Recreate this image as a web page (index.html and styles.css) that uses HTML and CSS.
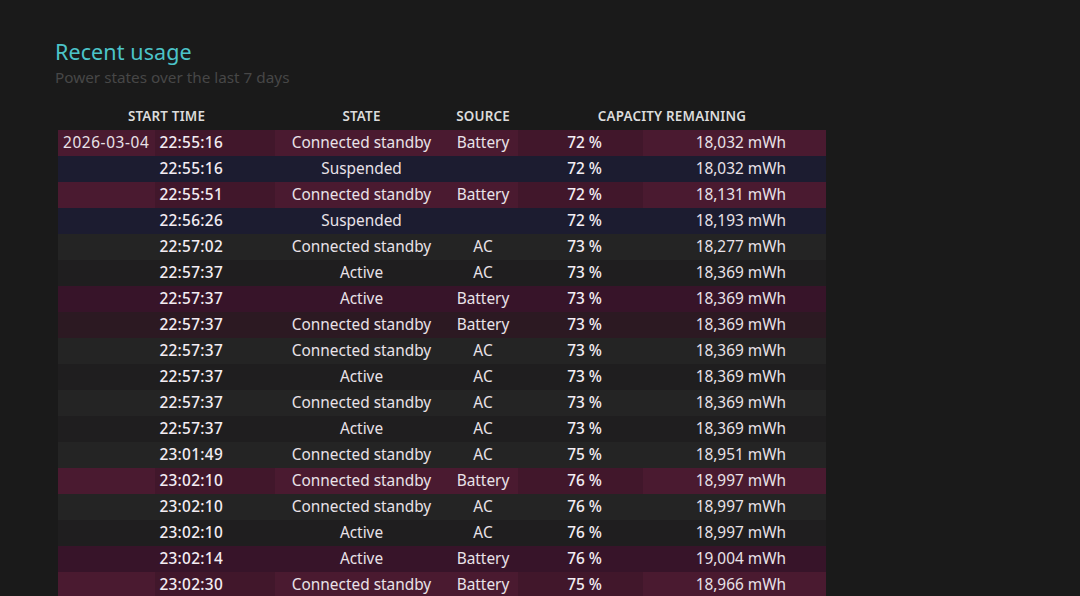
FILE: index.html
```html
<!DOCTYPE html>
<html>
<head>
<meta charset="utf-8">
<link rel="stylesheet" href="styles.css">
</head>
<body>
<section class="report">
  <h1 class="title">Recent usage</h1>
  <p class="subtitle">Power states over the last 7 days</p>
  <div class="table">
    <div class="row head">
      <div class="c-start">START TIME</div>
      <div class="c-state">STATE</div>
      <div class="c-source">SOURCE</div>
      <div class="c-cap">CAPACITY REMAINING</div>
    </div>
    <div class="row dc"><div class="c-date">2026-03-04</div><div class="c-time">22:55:16</div><div class="c-state">Connected standby</div><div class="c-source">Battery</div><div class="c-pct">72 %</div><div class="c-mwh">18,032 mWh</div></div>
    <div class="row susp"><div class="c-date"></div><div class="c-time">22:55:16</div><div class="c-state">Suspended</div><div class="c-source"></div><div class="c-pct">72 %</div><div class="c-mwh">18,032 mWh</div></div>
    <div class="row dc"><div class="c-date"></div><div class="c-time">22:55:51</div><div class="c-state">Connected standby</div><div class="c-source">Battery</div><div class="c-pct">72 %</div><div class="c-mwh">18,131 mWh</div></div>
    <div class="row susp"><div class="c-date"></div><div class="c-time">22:56:26</div><div class="c-state">Suspended</div><div class="c-source"></div><div class="c-pct">72 %</div><div class="c-mwh">18,193 mWh</div></div>
    <div class="row ac"><div class="c-date"></div><div class="c-time">22:57:02</div><div class="c-state">Connected standby</div><div class="c-source">AC</div><div class="c-pct">73 %</div><div class="c-mwh">18,277 mWh</div></div>
    <div class="row ac-active"><div class="c-date"></div><div class="c-time">22:57:37</div><div class="c-state">Active</div><div class="c-source">AC</div><div class="c-pct">73 %</div><div class="c-mwh">18,369 mWh</div></div>
    <div class="row dc-active"><div class="c-date"></div><div class="c-time">22:57:37</div><div class="c-state">Active</div><div class="c-source">Battery</div><div class="c-pct">73 %</div><div class="c-mwh">18,369 mWh</div></div>
    <div class="row dc-dim"><div class="c-date"></div><div class="c-time">22:57:37</div><div class="c-state">Connected standby</div><div class="c-source">Battery</div><div class="c-pct">73 %</div><div class="c-mwh">18,369 mWh</div></div>
    <div class="row ac"><div class="c-date"></div><div class="c-time">22:57:37</div><div class="c-state">Connected standby</div><div class="c-source">AC</div><div class="c-pct">73 %</div><div class="c-mwh">18,369 mWh</div></div>
    <div class="row ac-active"><div class="c-date"></div><div class="c-time">22:57:37</div><div class="c-state">Active</div><div class="c-source">AC</div><div class="c-pct">73 %</div><div class="c-mwh">18,369 mWh</div></div>
    <div class="row ac"><div class="c-date"></div><div class="c-time">22:57:37</div><div class="c-state">Connected standby</div><div class="c-source">AC</div><div class="c-pct">73 %</div><div class="c-mwh">18,369 mWh</div></div>
    <div class="row ac-active"><div class="c-date"></div><div class="c-time">22:57:37</div><div class="c-state">Active</div><div class="c-source">AC</div><div class="c-pct">73 %</div><div class="c-mwh">18,369 mWh</div></div>
    <div class="row ac"><div class="c-date"></div><div class="c-time">23:01:49</div><div class="c-state">Connected standby</div><div class="c-source">AC</div><div class="c-pct">75 %</div><div class="c-mwh">18,951 mWh</div></div>
    <div class="row dc"><div class="c-date"></div><div class="c-time">23:02:10</div><div class="c-state">Connected standby</div><div class="c-source">Battery</div><div class="c-pct">76 %</div><div class="c-mwh">18,997 mWh</div></div>
    <div class="row ac"><div class="c-date"></div><div class="c-time">23:02:10</div><div class="c-state">Connected standby</div><div class="c-source">AC</div><div class="c-pct">76 %</div><div class="c-mwh">18,997 mWh</div></div>
    <div class="row ac-active"><div class="c-date"></div><div class="c-time">23:02:10</div><div class="c-state">Active</div><div class="c-source">AC</div><div class="c-pct">76 %</div><div class="c-mwh">18,997 mWh</div></div>
    <div class="row dc-active"><div class="c-date"></div><div class="c-time">23:02:14</div><div class="c-state">Active</div><div class="c-source">Battery</div><div class="c-pct">76 %</div><div class="c-mwh">19,004 mWh</div></div>
    <div class="row dc"><div class="c-date"></div><div class="c-time">23:02:30</div><div class="c-state">Connected standby</div><div class="c-source">Battery</div><div class="c-pct">75 %</div><div class="c-mwh">18,966 mWh</div></div>
  </div>
</section>
</body>
</html>
```

FILE: styles.css
```css
html, body {
  margin: 0;
  padding: 0;
  background: #1a1a1a;
  height: 596px;
  overflow: hidden;
}

body {
  font-family: "Noto Sans", "Open Sans", sans-serif;
  color: #e9e2e8;
}

.report {
  padding: 37px 0 0 55px;
}

.title {
  margin: 0;
  font-size: 21.5px;
  line-height: 30px;
  font-weight: 400;
  color: #4cc4c9;
  letter-spacing: 0.1px;
}

.subtitle {
  margin: 0;
  font-size: 15.3px;
  line-height: 20px;
  color: #474747;
}

.table {
  margin: 18px 0 0 3px;
  width: 768px;
}

.row {
  display: grid;
  grid-template-columns: 97px 120px 173px 70px 125px 183px;
  height: 26px;
  align-items: center;
  font-size: 15.4px;
}

.row > div {
  height: 26px;
  line-height: 26px;
  white-space: nowrap;
}

.head {
  grid-template-columns: 217px 173px 70px 308px;
  height: 25px;
  font-size: 13.4px;
  font-weight: 600;
  color: #dcdcdc;
  letter-spacing: 0.2px;
}

.head > div {
  height: 25px;
  line-height: 23px;
  text-align: center;
}

.c-date {
  padding-left: 5px;
  font-weight: 400;
  letter-spacing: 0.6px;
}

.c-time {
  text-align: right;
  padding-right: 52px;
  font-weight: 500;
  letter-spacing: 0.3px;
  color: #f3edf3;
}

.c-state,
.c-source {
  text-align: center;
}

.c-pct {
  text-align: right;
  padding-right: 41px;
  font-weight: 500;
  color: #f3edf3;
}

.c-mwh {
  text-align: right;
  padding-right: 40px;
}

.dc {
  background: #41172b;
}
.dc > .c-date,
.dc > .c-state,
.dc > .c-source,
.dc > .c-mwh {
  background: #4a1a30;
}

.dc-active {
  background: #371429;
}

.dc-dim {
  background: #2c1922;
}

.susp {
  background: #1c1c30;
}

.ac {
  background: #242424;
}

.ac-active {
  background: #1f1e1f;
}
```
